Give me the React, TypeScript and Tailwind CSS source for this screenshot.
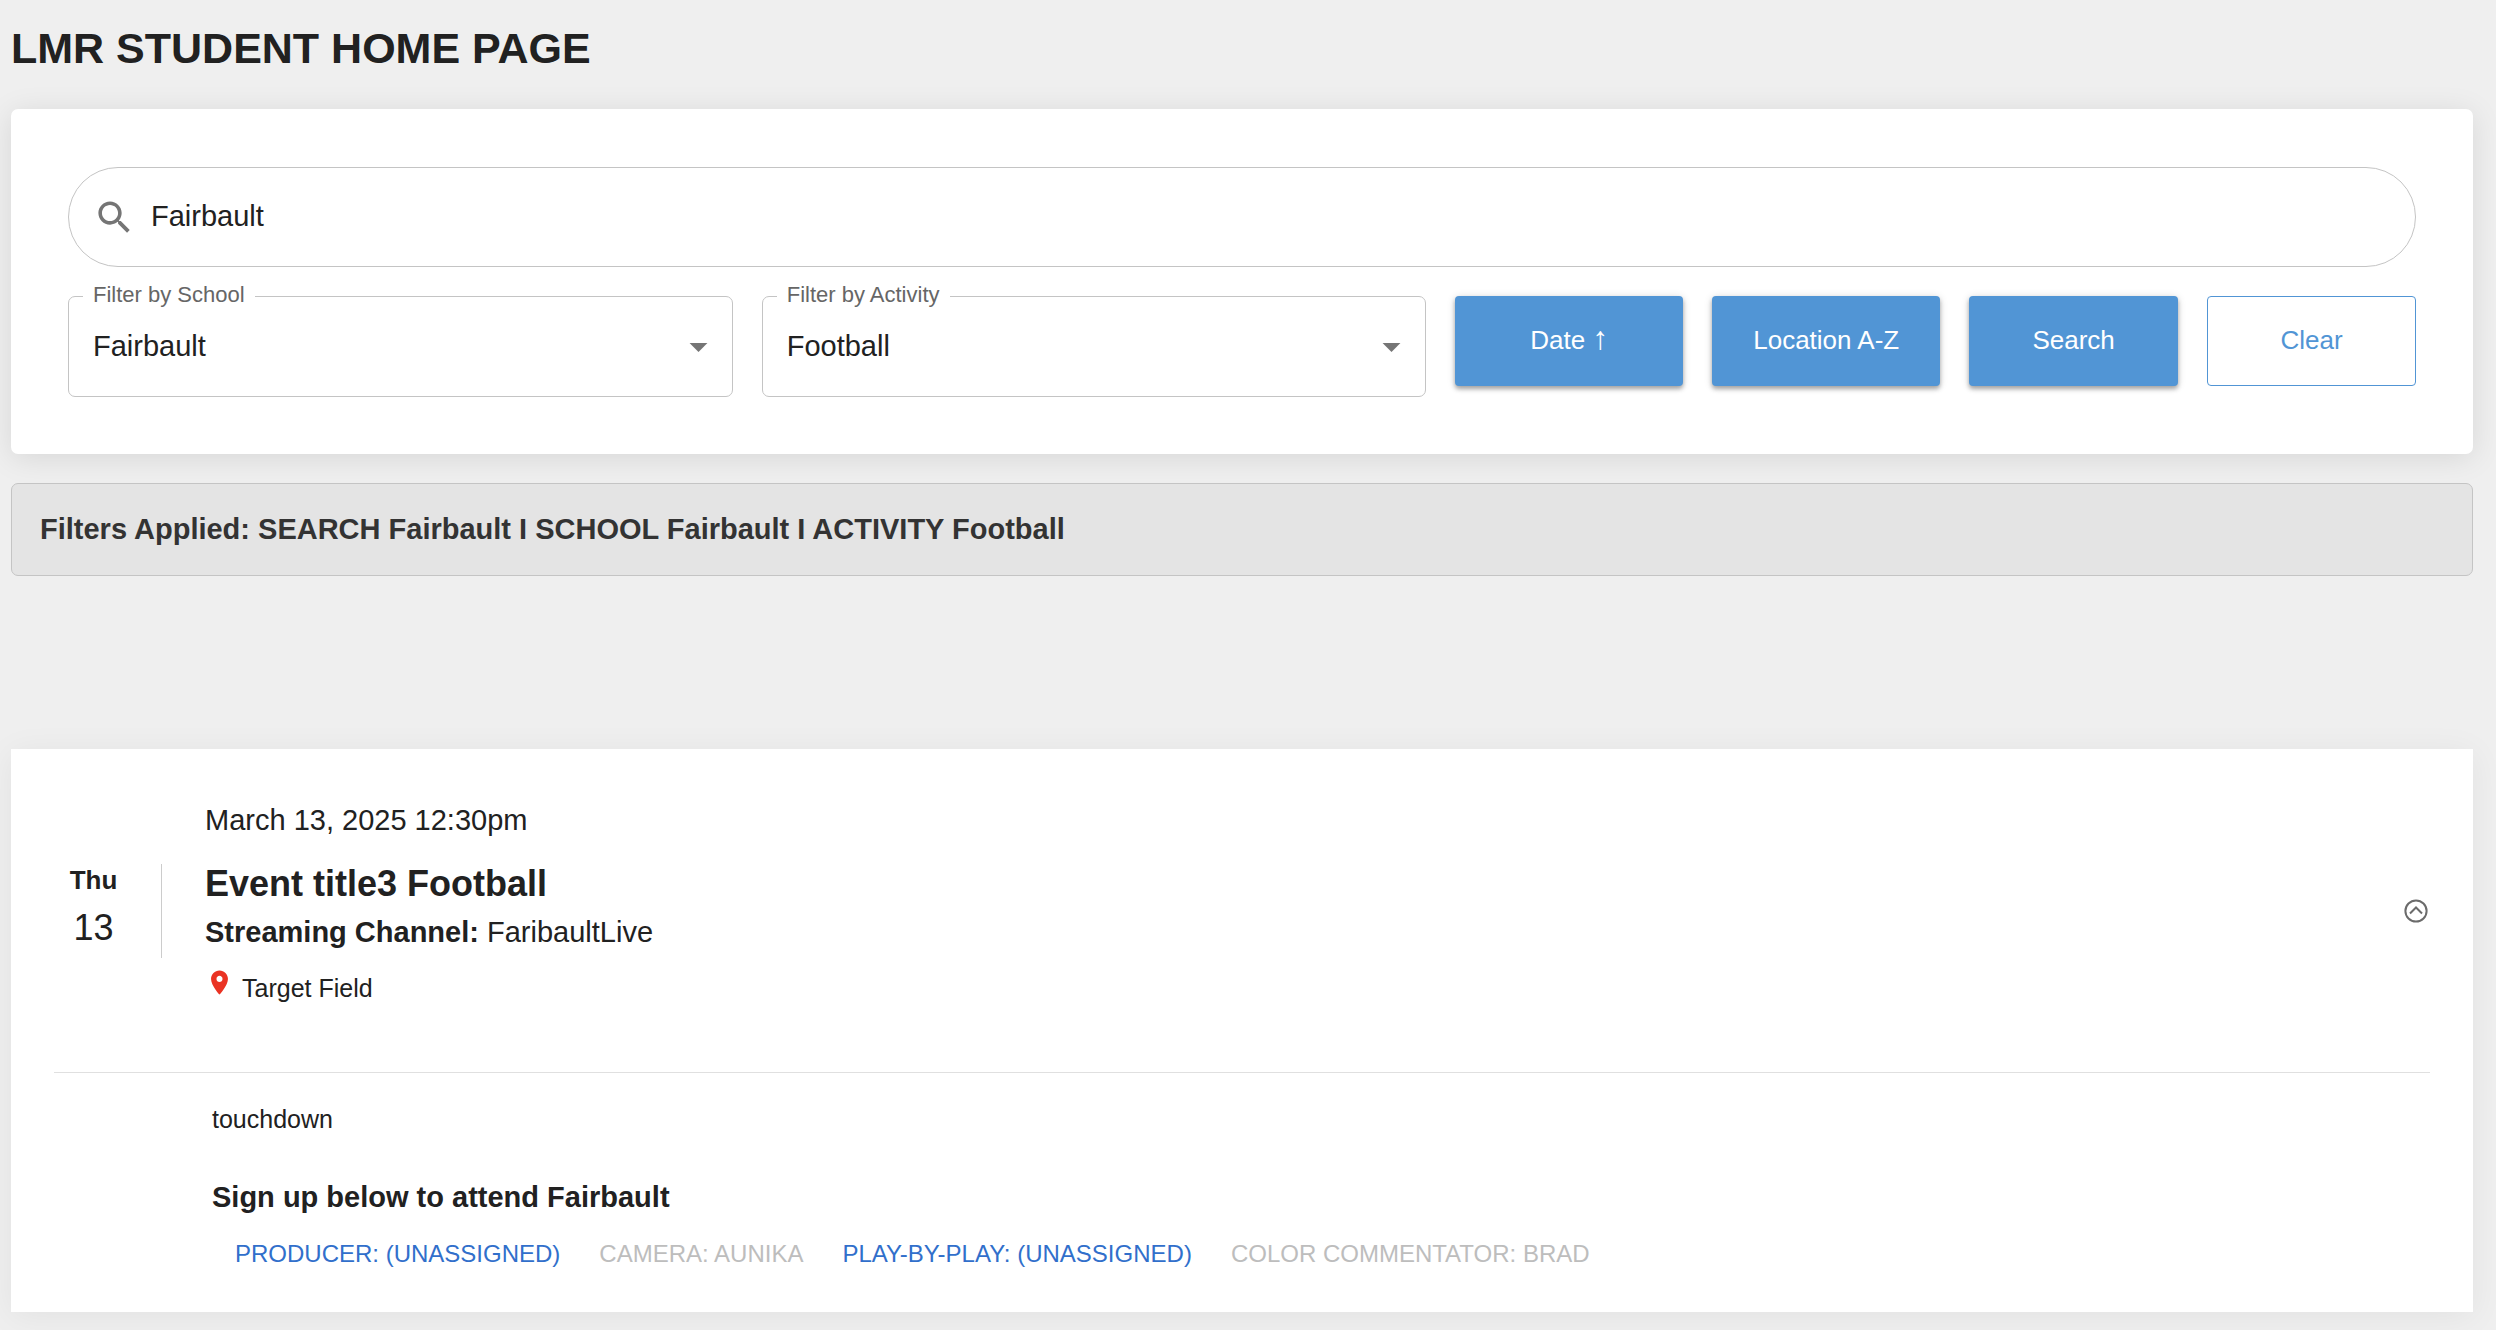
import type { ReactNode } from 'react';

type FilterSelectProps = { id: string; label: string; value: string; options: string[] };

function FilterSelect({ id, label, value, options }: FilterSelectProps) {
  return (
    <div className="relative h-[101px]">
      <label
        htmlFor={id}
        className="absolute -top-[13px] left-[15px] bg-white px-2.5 text-[22px] leading-6 text-[#666666]"
      >
        {label}
      </label>
      <select
        id={id}
        defaultValue={value}
        className="h-full w-full appearance-none rounded-[7px] border border-[#c4c4c4] bg-transparent px-6 text-[29px] text-[#212121]"
      >
        {options.map((option) => (
          <option key={option}>{option}</option>
        ))}
      </select>
      <svg
        viewBox="0 0 24 24"
        className="pointer-events-none absolute top-[29px] right-[13px] size-[43px] fill-[#757575]"
        aria-hidden="true"
      >
        <path d="M7 10l5 5 5-5z" />
      </svg>
    </div>
  );
}

function SolidButton({ children }: { children: ReactNode }) {
  return (
    <button
      type="button"
      className="h-[90px] rounded-[4px] bg-[#5195d5] pb-0.5 text-[26px] text-white shadow-[0_3px_4px_rgba(0,0,0,0.3),0_1px_8px_rgba(0,0,0,0.14)]"
    >
      {children}
    </button>
  );
}

const roles = [
  { text: 'PRODUCER: (UNASSIGNED)', open: true },
  { text: 'CAMERA: AUNIKA', open: false },
  { text: 'PLAY-BY-PLAY: (UNASSIGNED)', open: true },
  { text: 'COLOR COMMENTATOR: BRAD', open: false },
];

export default function App() {
  return (
    <main className="min-h-screen bg-[#efefef] pt-5 pr-[23px] pb-[18px] pl-[11px] font-['Liberation_Sans',Arial,sans-serif] text-[#212121]">
      <h1 className="text-[43px] leading-[56px] font-bold">LMR STUDENT HOME PAGE</h1>

      <form
        className="mt-[33px] rounded-[7px] bg-white px-[57px] pt-[58px] pb-[57px] shadow-[0_4px_30px_rgba(0,0,0,0.1)]"
        onSubmit={(e) => e.preventDefault()}
      >
        <div className="flex h-[100px] items-center gap-[15px] rounded-full border border-[#c4c4c4] pr-8 pl-6">
          <svg viewBox="0 0 24 24" className="size-[43px] fill-[#757575]" aria-hidden="true">
            <path d="M15.5 14h-.79l-.28-.27C15.41 12.59 16 11.11 16 9.5 16 5.91 13.09 3 9.5 3S3 5.91 3 9.5 5.91 16 9.5 16c1.61 0 3.09-.59 4.23-1.57l.27.28v.79l5 4.99L20.49 19l-4.99-5zm-6 0C7.01 14 5 11.99 5 9.5S7.01 5 9.5 5 14 7.01 14 9.5 11.99 14 9.5 14z" />
          </svg>
          <input
            type="text"
            aria-label="Search events"
            defaultValue="Fairbault"
            className="min-w-0 flex-1 bg-transparent text-[29px] outline-none"
          />
        </div>

        <div className="mt-[29px] grid grid-cols-[35fr_35fr_12fr_12fr_11fr_11fr] gap-x-[29px]">
          <FilterSelect
            id="school"
            label="Filter by School"
            value="Fairbault"
            options={['Fairbault']}
          />
          <FilterSelect
            id="activity"
            label="Filter by Activity"
            value="Football"
            options={['Football']}
          />
          <SolidButton>
            Date <span className="text-[32px] leading-none">↑</span>
          </SolidButton>
          <SolidButton>Location A-Z</SolidButton>
          <SolidButton>Search</SolidButton>
          <button
            type="button"
            className="h-[90px] rounded-[4px] border border-[#5195d5] pb-0.5 text-[26px] text-[#5195d5]"
          >
            Clear
          </button>
        </div>
      </form>

      <p className="mt-[29px] rounded-[7px] border border-[#c4c4c4] bg-[#e4e4e4] px-7 py-7 text-[29px] leading-[35px] font-bold text-[#333333]">
        Filters Applied: SEARCH Fairbault I SCHOOL Fairbault I ACTIVITY Football
      </p>

      <article className="mt-[173px] bg-white px-[43px] pt-[50px] pb-[38px] shadow-[0_4px_32px_rgba(0,0,0,0.06)]">
        <div className="flex items-center border-b border-[#e0e0e0] pb-[50px]">
          <div className="flex h-[94px] w-[108px] flex-col items-center border-r border-[#cccccc] pr-7">
            <span className="text-[26px] leading-8 font-bold">Thu</span>
            <span className="mt-2.5 text-[36px] leading-[44px]">13</span>
          </div>
          <div className="ml-[43px] flex-1 pb-[14px]">
            <p className="text-[29px] leading-[42px]">March 13, 2025 12:30pm</p>
            <h2 className="mt-[21px] text-[36px] leading-[44px] font-bold">Event title3 Football</h2>
            <p className="mt-2 text-[29px] leading-9">
              <strong>Streaming Channel:</strong> FaribaultLive
            </p>
            <p className="mt-[18px] flex items-start gap-2 text-[25px] leading-10">
              <svg viewBox="0 0 24 24" className="size-[29px] fill-[#ea3323]" aria-hidden="true">
                <path d="M12 2C8.13 2 5 5.13 5 9c0 5.25 7 13 7 13s7-7.75 7-13c0-3.87-3.13-7-7-7zm0 9.5c-1.38 0-2.5-1.12-2.5-2.5s1.12-2.5 2.5-2.5 2.5 1.12 2.5 2.5-1.12 2.5-2.5 2.5z" />
              </svg>
              Target Field
            </p>
          </div>
          <button type="button" aria-label="Collapse event" className="mr-0.5">
            <svg
              viewBox="0 0 24 24"
              className="size-6 fill-none stroke-[#6b6b6b] stroke-2"
              aria-hidden="true"
            >
              <circle cx="12" cy="12" r="10.6" />
              <path d="M6 14.5l6-6 6 6" />
            </svg>
          </button>
        </div>

        <div className="pt-7 pl-[158px]">
          <p className="text-[25px] leading-9">touchdown</p>
          <h3 className="mt-10 text-[29px] leading-10 font-bold">Sign up below to attend Fairbault</h3>
          <div className="mt-[17px] flex gap-[39px] pl-[23px] text-[24px] leading-10">
            {roles.map((role) => (
              <button
                key={role.text}
                type="button"
                disabled={!role.open}
                className="text-[#316fcb] disabled:text-[#bdbdbd]"
              >
                {role.text}
              </button>
            ))}
          </div>
        </div>
      </article>
    </main>
  );
}
